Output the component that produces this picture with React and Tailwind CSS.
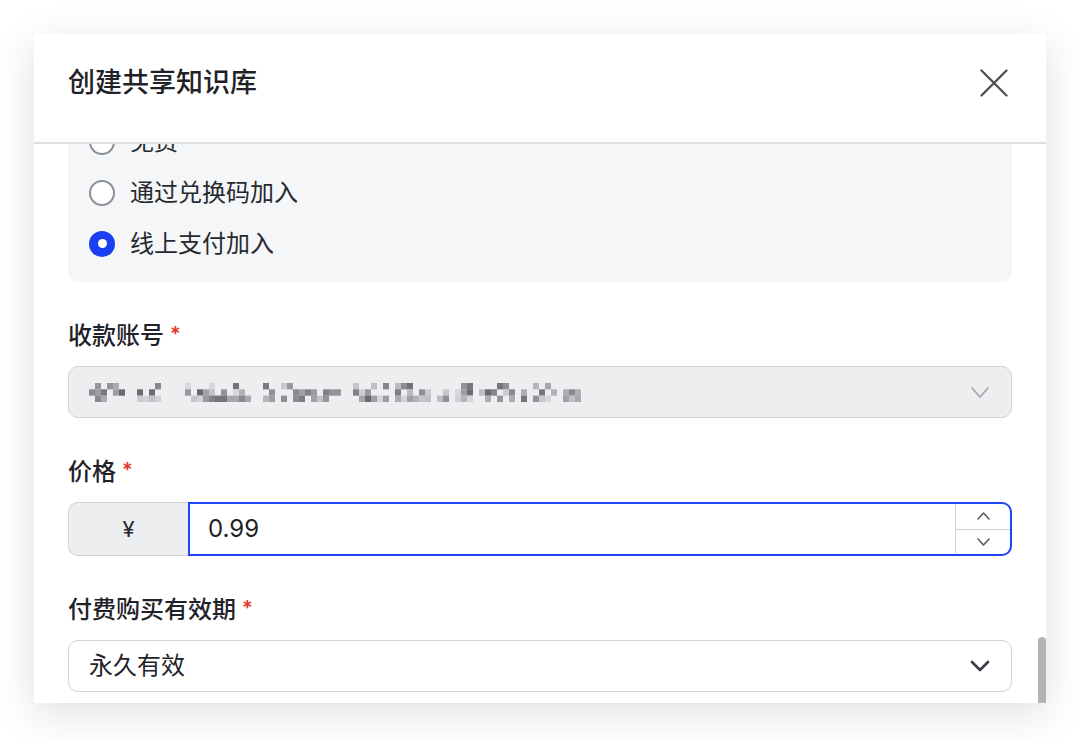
import { useMemo } from 'react'

const FONT = "font-['Inter','Noto_Sans_CJK_SC',sans-serif]"

// pixelated account name, the way it shows up in the reference
const Mosaic = () => {
    const cells = useMemo(() => {
        let seed = 11
        const rnd = () => {
            seed = (seed * 16807) % 2147483647
            return seed / 2147483647
        }
        const gaps = [6, 7, 12, 13, 14, 15, 27, 28, 42, 43, 50, 57, 64, 71, 78]
        const out = []
        for (let c = 0; c < 82; c++) {
            if (gaps.includes(c)) continue
            for (let r = 0; r < 3; r++) {
                const v = rnd()
                const keep = r === 0 ? v > 0.7 : v > 0.3
                if (!keep) continue
                const shade = Math.floor(105 + rnd() * 110)
                out.push({ x: c * 6, y: r * 6.3, fill: `rgb(${shade},${shade},${shade + 6})` })
            }
        }
        return out
    }, [])

    return (
        <svg width="492" height="19" viewBox="0 0 492 19">
            {cells.map((cell, i) => (
                <rect key={i} x={cell.x} y={cell.y} width="6" height="6.4" fill={cell.fill} />
            ))}
        </svg>
    )
}

const Chevron = ({ up, w = 16, h = 9, stroke = '#a3a7ae', sw = 1.8 }) => (
    <svg width={w + 4} height={h + 4} viewBox={`-2 -2 ${w + 4} ${h + 4}`} fill="none">
        <path
            d={up ? `M0 ${h} L${w / 2} 0 L${w} ${h}` : `M0 0 L${w / 2} ${h} L${w} 0`}
            stroke={stroke}
            strokeWidth={sw}
            strokeLinecap="round"
            strokeLinejoin="round"
        />
    </svg>
)

const Radio = ({ checked, label }) => (
    <div className="h-[51px] flex items-center gap-[15px]">
        {checked ? (
            <div className="w-[26px] h-[26px] rounded-full bg-[#1a3ff0] flex items-center justify-center">
                <div className="w-[9px] h-[9px] rounded-full bg-white" />
            </div>
        ) : (
            <div className="w-[26px] h-[26px] rounded-full bg-white border-2 border-[#8b9098]" />
        )}
        <span className="text-[24px] leading-none text-[#262a30]">{label}</span>
    </div>
)

const Label = ({ children }) => (
    <div className="h-8 flex items-center mb-[14px]">
        <span className="text-[24px] font-medium text-[#1f2329] leading-none">{children}</span>
        <span className="ml-[6px] text-[20px] leading-none font-semibold text-[#e5352b] self-start mt-[4px]">*</span>
    </div>
)

export default function App() {
    return (
        <div className={`min-h-[738px] bg-white pt-[34px] pl-[34px] ${FONT}`}>
            <div className="relative w-[1012px] h-[669px] bg-white flex flex-col shadow-[0_10px_40px_rgba(0,0,0,0.13)]">
                <div className="h-[110px] shrink-0 flex items-start justify-between px-[34px] pt-[30px] border-b-2 border-[#dedfe1] bg-white relative z-10">
                    <h1 className="text-[27px] font-medium text-[#1f2329] leading-[38px]">创建共享知识库</h1>
                    <svg width="28" height="28" viewBox="0 0 28 28" className="mr-[4px] mt-[5px]">
                        <path d="M1.5 1.5 L26.5 26.5 M26.5 1.5 L1.5 26.5" stroke="#4b5058" strokeWidth="2.3" strokeLinecap="round" />
                    </svg>
                </div>

                <div className="flex-1 overflow-hidden px-[34px]">
                    <div className="mt-[-44px]">
                        <div className="bg-[#f5f6f8] rounded-[10px] px-[21px] pt-[16px] pb-[13px]">
                            <Radio label="免费" />
                            <Radio label="通过兑换码加入" />
                            <Radio checked label="线上支付加入" />
                        </div>

                        <div className="mt-[38px]">
                            <Label>收款账号</Label>
                            <div className="h-[52px] rounded-[10px] border border-[#cfd2d6] bg-[#eceef0] flex items-center justify-between pl-[20px] pr-[21px]">
                                <Mosaic />
                                <Chevron />
                            </div>
                        </div>

                        <div className="mt-[38px]">
                            <Label>价格</Label>
                            <div className="h-[54px] flex">
                                <div className="w-[120px] shrink-0 bg-[#eceef0] border border-r-0 border-[#cfd2d6] rounded-l-[10px] flex items-center justify-center text-[22px] text-[#262a30]">
                                    ¥
                                </div>
                                <div className="flex-1 flex border-2 border-[#1d45f2] rounded-r-[10px] bg-white overflow-hidden">
                                    <div className="flex-1 flex items-center pl-[18px] text-[24px] text-[#1f2329]">0.99</div>
                                    <div className="w-[55px] border-l border-[#cfd2d6] flex flex-col">
                                        <div className="flex-1 flex items-center justify-center border-b border-[#cfd2d6]">
                                            <Chevron up w={11} h={6} stroke="#555a62" sw={1.6} />
                                        </div>
                                        <div className="flex-1 flex items-center justify-center">
                                            <Chevron w={11} h={6} stroke="#555a62" sw={1.6} />
                                        </div>
                                    </div>
                                </div>
                            </div>
                        </div>

                        <div className="mt-[38px]">
                            <Label>付费购买有效期</Label>
                            <div className="h-[52px] rounded-[10px] border border-[#cfd2d6] bg-white flex items-center justify-between pl-[20px] pr-[21px]">
                                <span className="text-[24px] text-[#1f2329] leading-none">永久有效</span>
                                <Chevron w={16} h={8} stroke="#3a3f47" sw={2.6} />
                            </div>
                        </div>
                    </div>
                </div>

                <div className="absolute right-0 bottom-0 w-[8px] h-[66px] bg-[#b3b3b3] rounded-t-[4px]" />
            </div>
        </div>
    )
}
